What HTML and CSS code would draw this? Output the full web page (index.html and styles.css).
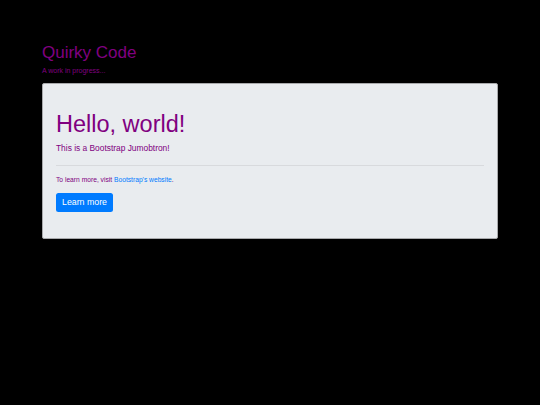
FILE: index.html
```html
<!DOCTYPE html>
<html>
<head>
<meta charset="utf-8">
<link rel="stylesheet" href="styles.css">
</head>
<body>
<div class="container">
  <header class="site-header">
    <h1 class="site-title">Quirky Code</h1>
    <p class="site-sub">A work in progress...</p>
  </header>
  <div class="jumbotron">
    <h2 class="display">Hello, world!</h2>
    <p class="lead">This is a Bootstrap Jumobtron!</p>
    <hr class="divider">
    <p class="note">To learn more, visit <a href="#" class="link">Bootstrap's website</a>.</p>
    <a href="#" class="btn">Learn more</a>
  </div>
</div>
</body>
</html>
```
FILE: styles.css
```css
html, body {
  margin: 0;
  padding: 0;
  background: #000;
  font-family: "Liberation Sans", Arial, sans-serif;
  color: #800080;
}
.container {
  width: 456px;
  margin: 0 auto;
  padding-top: 43px;
}
.site-title {
  margin: 0;
  font-size: 17px;
  font-weight: 400;
  line-height: 20px;
}
.site-sub {
  margin: 3px 0 0;
  font-size: 7px;
  line-height: 9px;
}
.jumbotron {
  margin-top: 8px;
  background: #e9ecef;
  border: 1px solid #a8a9ab;
  border-radius: 2px;
  padding: 26px 13px 26px 13px;
  height: 102px;
}
.display {
  margin: 0;
  font-size: 23.5px;
  font-weight: 400;
  line-height: 28px;
}
.lead {
  margin: 5px 0 0;
  font-size: 8.4px;
  line-height: 11px;
}
.divider {
  margin: 11px 0 0;
  border: 0;
  border-top: 1px solid #d8dadd;
}
.note {
  margin: 9px 0 0;
  font-size: 6.7px;
  line-height: 9px;
}
.link {
  color: #007bff;
  text-decoration: none;
}
.btn {
  display: inline-block;
  margin-top: 9px;
  background: #007bff;
  color: #fff;
  font-size: 8.8px;
  line-height: 19px;
  padding: 0 6px;
  border-radius: 2.5px;
  text-decoration: none;
}
```
